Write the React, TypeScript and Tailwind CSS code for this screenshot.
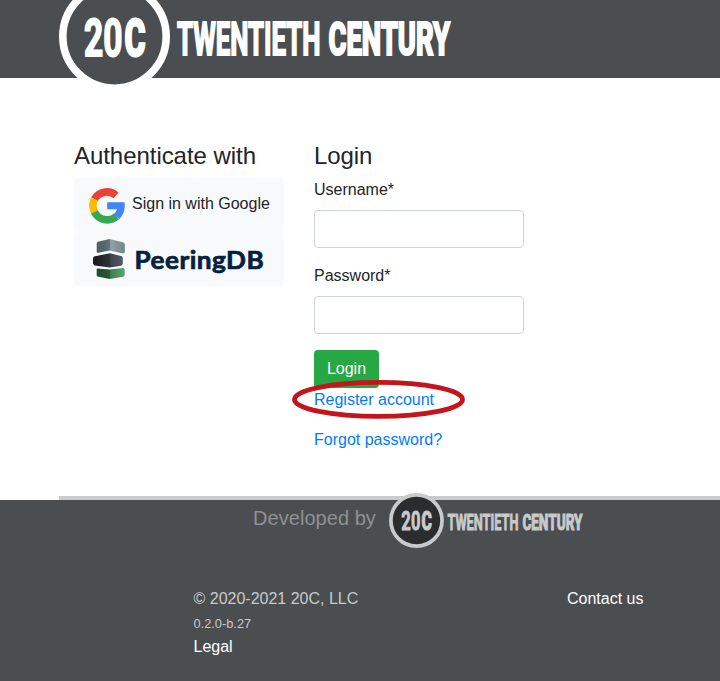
import React from "react";

type LogoProps = { className: string; ink: string; disc: string };

function Logo({ className, ink, disc }: LogoProps) {
  return (
    <svg viewBox="0 0 392 111" className={className} fill={ink} stroke={ink} fontFamily="Roboto, 'Liberation Sans', sans-serif">
      <circle cx="55.5" cy="55.5" r="51.7" fill={disc} strokeWidth="7.6" />
      <text transform="translate(25 74.6) scale(.63 1)" fontSize="52.5" fontWeight="700" textLength="61" lengthAdjust="spacingAndGlyphs" strokeWidth="1.8">20</text>
      <text transform="translate(65.5 74.6) scale(.6 1)" fontSize="52.5" fontWeight="900" textLength="35" lengthAdjust="spacingAndGlyphs" strokeWidth="2.2">C</text>
      <text transform="translate(118 74.4) scale(.555 1)" fontSize="45.5" fontWeight="700" textLength="258.5" lengthAdjust="spacingAndGlyphs" strokeWidth="1.9">TWENTIETH</text>
      <text transform="translate(269.5 74.4) scale(.583 1)" fontSize="45.5" fontWeight="800" textLength="208.5" lengthAdjust="spacingAndGlyphs" strokeWidth="2.2">CENTURY</text>
    </svg>
  );
}

function GoogleIcon() {
  return (
    <svg viewBox="0 0 36 37" className="h-[37px] w-9 shrink-0">
      <g fill="none" strokeWidth="7.6">
        <path stroke="#EA4335" d="M27.1 8.3A14.3 14.3 0 0 0 5.4 12.2" />
        <path stroke="#FBBC05" d="M5.4 12.2A14.4 14.4 0 0 0 5.4 24.8" />
        <path stroke="#34A853" d="M5.4 24.8A14.3 14.3 0 0 0 27.5 29.4" />
      </g>
      <path fill="#4285F4" d="M18.2 15.2h17.2c.3 1.2.4 2.4.4 3.6 0 5.2-1.9 9.9-5.4 13.1l-5.8-4.6c1.7-1.2 2.9-2.9 3.4-5H18.2z" />
    </svg>
  );
}

function PeeringIcon() {
  return (
    <svg viewBox="0 0 32 40" className="h-10 w-8 shrink-0">
      <defs>
        <linearGradient id="pdb-top"><stop offset="0" stopColor="#4c5f63" /><stop offset=".45" stopColor="#5d7275" /><stop offset=".5" stopColor="#90a3a4" /><stop offset="1" stopColor="#728789" /></linearGradient>
        <linearGradient id="pdb-mid"><stop offset="0" stopColor="#17181c" /><stop offset=".55" stopColor="#303238" /><stop offset=".6" stopColor="#3e424c" /><stop offset="1" stopColor="#555a66" /></linearGradient>
        <linearGradient id="pdb-low"><stop offset="0" stopColor="#1e4a2b" /><stop offset=".45" stopColor="#25582f" /><stop offset=".5" stopColor="#3e7d51" /><stop offset="1" stopColor="#58a674" /></linearGradient>
      </defs>
      <path fill="url(#pdb-top)" d="M4.6 2.8 16.5 0 30 3.2 31.8 5v8.6l-1.5 1-13.8-3-12 2.4-.8-1V4z" />
      <path fill="url(#pdb-mid)" d="M1 17.4 17 14.2l11.8 3 1 1.8v6l-1.6 1.8L17 28.4 1.4 26.6 0 24.6v-5.4z" />
      <path fill="url(#pdb-low)" d="M4.4 29.4 16.5 30.6l13.8-1.5 1.4.8v6.7l-1.5 1.2-13.7 2.2-12-2.4-.8-1.2v-6.4z" />
    </svg>
  );
}

function Field({ label, type }: { label: string; type: string }) {
  return (
    <label className="mb-4 block">
      <span className="mb-2 block">{label}</span>
      <input type={type} className="block h-[38px] w-full rounded border border-[#ced4da] bg-white px-3 outline-none" />
    </label>
  );
}

export default function App() {
  return (
    <div className="h-[681px] w-[720px] overflow-hidden bg-white font-['Liberation_Sans',Arial,sans-serif] text-base text-[#212529]">
      <header className="h-[78px] bg-[#4a4e51] pl-[59px]">
        <Logo className="relative -top-[19px] h-[111px] w-[392px] overflow-visible" ink="#fff" disc="#4a4e51" />
      </header>

      <main className="flex h-[418px] gap-[30px] pl-[74px] pt-[63px]">
        <section className="w-[210px]">
          <h4 className="mb-2 text-2xl leading-[29px] tracking-[-0.05px]">Authenticate with</h4>
          <a className="flex h-[54px] items-center rounded bg-[#f8f9fa] pl-[15px]">
            <GoogleIcon />
            <span className="ml-[7px] pb-0.5 whitespace-nowrap">Sign in with Google</span>
          </a>
          <a className="flex h-[54px] items-center rounded bg-[#f8f9fa] pl-[19px]">
            <PeeringIcon />
            <svg viewBox="0 0 130 30" className="ml-[10px] h-[30px] w-[130px] overflow-visible">
              <text transform="translate(-0.5 25.3) scale(1.09 1)" fill="#06213f" fontFamily="Lato, sans-serif" fontWeight="700" fontSize="24" stroke="#06213f" strokeWidth=".7" textLength="118.5" lengthAdjust="spacing">PeeringDB</text>
            </svg>
          </a>
        </section>

        <section className="w-[210px]">
          <h4 className="mb-2 text-2xl leading-[29px] tracking-[-0.1px]">Login</h4>
          <Field label="Username*" type="text" />
          <Field label="Password*" type="password" />
          <button className="block h-[38px] w-[65px] rounded bg-[#28a745] text-white">Login</button>
          <div className="relative mb-4 h-6">
            <a className="text-[#007bff]">Register account</a>
            <svg viewBox="0 0 174 40" className="absolute -left-[22px] -top-2 h-10 w-[174px] max-w-none">
              <ellipse cx="86.5" cy="19.4" rx="84" ry="17" fill="none" stroke="#c4141c" strokeWidth="4.8" />
            </svg>
          </div>
          <a className="text-[#007bff]">Forgot password?</a>
        </section>
      </main>

      <div className="ml-[59px] h-1 bg-[#c8cacc]" />
      <footer className="h-[181px] bg-[#4a4e51]">
        <div className="flex h-[87px] items-start pl-[253px]">
          <span className="w-[136px] whitespace-nowrap pt-[3px] text-xl leading-[30px] tracking-[0.05px] text-[#8f9193]">Developed by</span>
          <Logo className="-mt-[7px] h-[55px] w-[194px] shrink-0 overflow-visible" ink="#c8cacc" disc="#2b2c2e" />
        </div>
        <div className="flex pl-[193.5px]">
          <div className="w-[373.5px] text-[#c8cacc]">
            <p>© 2020-2021 20C, LLC</p>
            <p className="text-[12.8px] leading-[25px]">0.2.0-b.27</p>
            <p className="-mt-px text-white">Legal</p>
          </div>
          <a className="text-white">Contact us</a>
        </div>
      </footer>
    </div>
  );
}
